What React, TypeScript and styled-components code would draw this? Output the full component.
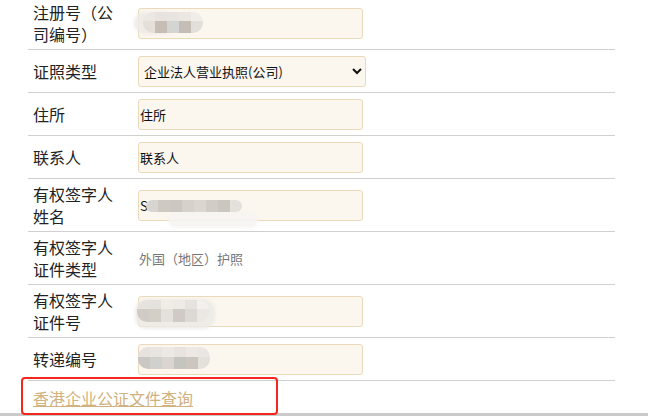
import React from "react";
import styled, { createGlobalStyle } from "styled-components";

const Global = createGlobalStyle`
  html, body { margin: 0; padding: 0; background: #fff; overflow: hidden; }
  body { font-family: "Microsoft YaHei", "Noto Sans CJK SC", "Noto Sans", sans-serif; color: #333; }
`;

const Page = styled.div`
  position: relative;
  width: 648px;
  height: 416px;
  overflow: hidden;
`;

const Form = styled.div`
  margin: -3px 0 0 28px;
  width: 587px;
`;

const Row = styled.div`
  display: flex;
  align-items: center;
  box-sizing: border-box;
  min-height: 43px;
  padding: 4px 0;
  border-bottom: 1px solid #d0d0d0;
`;

const Label = styled.div`
  box-sizing: border-box;
  width: 110px;
  padding-left: 5px;
  padding-right: 12px;
  font-size: 16px;
  line-height: 22px;
  color: #222;
`;

const Field = styled.div`
  position: relative;
  width: 225px;
  height: 31px;
`;

const TextInput = styled.input`
  box-sizing: border-box;
  width: 100%;
  height: 100%;
  margin: 0;
  padding: 0 1px;
  border: 1px solid #ead9ba;
  border-radius: 3px;
  background: #fbf6ee;
  font-family: inherit;
  font-size: 13px;
  color: #111;
  outline: none;
`;

const Select = styled.select`
  box-sizing: border-box;
  width: 228px;
  height: 31px;
  margin: 0;
  padding: 0 1px;
  border: 1px solid #ead9ba;
  border-radius: 3px;
  background-color: #fbf6ee;
  font-family: inherit;
  font-size: 13px;
  color: #111;
`;

const Plain = styled.div`
  padding-left: 1px;
  font-size: 13px;
  color: #777;
`;

const MosaicBox = styled.div<{ $cols: number; $cw: number; $rows: string }>`
  position: absolute;
  display: grid;
  grid-template-columns: repeat(${(p) => p.$cols}, ${(p) => p.$cw}px);
  grid-template-rows: ${(p) => p.$rows};
  border-radius: 10px;
  overflow: hidden;
  pointer-events: none;
`;

const Cell = styled.div<{ $c: string }>`
  background: ${(p) => p.$c};
`;

const Blob = styled.div`
  position: absolute;
  border-radius: 12px;
  background: rgba(236, 233, 229, 0.85);
  filter: blur(1.5px);
  pointer-events: none;
`;

const LinkRow = styled.div`
  padding: 5px 0 0 5px;
`;

const Link = styled.a`
  font-size: 16px;
  line-height: 22px;
  color: #cfb27f;
  text-decoration: underline;
  cursor: pointer;
`;

const Highlight = styled.div`
  position: absolute;
  left: 21px;
  top: 377px;
  width: 257px;
  height: 38px;
  box-sizing: border-box;
  border: 2px solid #f5261c;
  border-radius: 4px;
  z-index: 2;
`;

const ScrollBar = styled.div`
  position: absolute;
  left: 0;
  right: 0;
  bottom: 0;
  height: 3px;
  background: #cbcbcb;
`;

type MosaicProps = {
  left: number;
  top: number;
  cols: number;
  cw: number;
  rows: string;
  colors: string[];
};

const Mosaic = ({ left, top, cols, cw, rows, colors }: MosaicProps) => (
  <MosaicBox $cols={cols} $cw={cw} $rows={rows} style={{ left, top }}>
    {colors.map((c, i) => (
      <Cell key={i} $c={c} />
    ))}
  </MosaicBox>
);

export default function App() {
  return (
    <Page>
      <Global />
      <Form>
        <Row>
          <Label>注册号（公司编号）</Label>
          <Field>
            <TextInput readOnly value="" />
            <Blob style={{ left: -4, top: 4, width: 40, height: 22 }} />
            <Mosaic
              left={5}
              top={4}
              cols={5}
              cw={12}
              rows="9px 12px"
              colors={[
                "#ebe8e4", "#e8e3de", "#e8e4e0", "#ebe8e3", "#f0ede8",
                "#e4dfd9", "#c6bdb4", "#d2d5d1", "#c4beb7", "#e2ded9",
              ]}
            />
          </Field>
        </Row>
        <Row>
          <Label>证照类型</Label>
          <Select defaultValue="1">
            <option value="1">企业法人营业执照(公司)</option>
          </Select>
        </Row>
        <Row>
          <Label>住所</Label>
          <Field>
            <TextInput readOnly value="住所" />
          </Field>
        </Row>
        <Row>
          <Label>联系人</Label>
          <Field>
            <TextInput readOnly value="联系人" />
          </Field>
        </Row>
        <Row>
          <Label>有权签字人姓名</Label>
          <Field>
            <TextInput readOnly value="S" />
            <Blob style={{ left: 30, top: 22, width: 90, height: 16, background: "rgba(246,244,242,0.9)" }} />
            <Mosaic
              left={8}
              top={10}
              cols={8}
              cw={12}
              rows="12px"
              colors={[
                "#d8d4cf", "#cfc9c3", "#cdc7c1", "#d6d1cb", "#dcd6d0", "#d2ccc6", "#ccc6c0", "#e4e0dc",
              ]}
            />
          </Field>
        </Row>
        <Row>
          <Label>有权签字人证件类型</Label>
          <Plain>外国（地区）护照</Plain>
        </Row>
        <Row>
          <Label>有权签字人证件号</Label>
          <Field>
            <TextInput readOnly value="" />
            <Blob style={{ left: -3, top: 3, width: 80, height: 30 }} />
            <Mosaic
              left={-1}
              top={4}
              cols={6}
              cw={12}
              rows="9px 13px"
              colors={[
                "#e6e3df", "#e5e1dc", "#f0ede6", "#eeebe6", "#e6e3df", "#f3f1ee",
                "#d0cbc6", "#d4cfc6", "#e4e1dd", "#cfcac5", "#dcd9d4", "#ebe8e4",
              ]}
            />
          </Field>
        </Row>
        <Row>
          <Label>转递编号</Label>
          <Field>
            <TextInput readOnly value="" />
            <Mosaic
              left={0}
              top={3}
              cols={6}
              cw={12}
              rows="10px 12px"
              colors={[
                "#e6e3df", "#e8e5e1", "#ece9e4", "#e7e4e0", "#ede8e3", "#e9e6e3",
                "#cbc7c2", "#d0d1cc", "#dad5d0", "#c5c5c0", "#ccc6c1", "#e4e1dd",
              ]}
            />
          </Field>
        </Row>
        <LinkRow>
          <Link>香港企业公证文件查询</Link>
        </LinkRow>
      </Form>
      <Highlight />
      <ScrollBar />
    </Page>
  );
}
